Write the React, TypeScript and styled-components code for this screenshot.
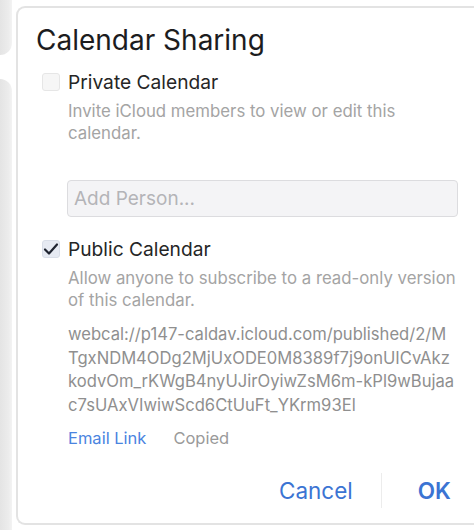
import React from "react";
import styled, { createGlobalStyle } from "styled-components";

const Global = createGlobalStyle`
  html, body { margin: 0; padding: 0; background: #ffffff; }
  body { overflow: hidden; font-family: Inter, "Noto Sans", "Liberation Sans", sans-serif; }
  * { box-sizing: border-box; }
`;

const Stage = styled.div`
  display: flex;
  width: 474px;
  height: 530px;
  overflow: hidden;
`;

const Backdrop = styled.div`
  width: 16px;
  flex: none;
  display: flex;
  flex-direction: column;
  gap: 24px;
`;

const BackWindow = styled.div<{ $top?: boolean }>`
  width: 12px;
  background: linear-gradient(90deg, #e4e4e4 0%, #ececec 70%, #f3f3f3 100%);
  ${(p) =>
    p.$top
      ? `height: 55px; border-bottom-right-radius: 12px;`
      : `flex: 1; border-top-right-radius: 12px;`}
`;

const Dialog = styled.div`
  margin-top: 6px;
  width: 480px;
  height: 519px;
  flex: none;
  border: 2px solid #e3e3e3;
  border-right: none;
  border-radius: 9px 0 0 9px;
  background: #ffffff;
  display: flex;
  flex-direction: column;
  padding: 12px 0 0 18px;
`;

const Title = styled.h1`
  margin: 0;
  font-size: 28px;
  font-weight: 400;
  color: #1c1c1e;
  line-height: 40px;
`;

const Section = styled.div`
  margin-top: 10px;
  padding-left: 6px;
  display: flex;
  flex-direction: column;
`;

const OptionRow = styled.label<{ $gap?: number }>`
  display: flex;
  align-items: center;
  gap: 8px;
  height: 24px;
  margin-top: ${(p) => p.$gap ?? 0}px;
`;

const Box = styled.span<{ $checked?: boolean }>`
  width: 18px;
  height: 18px;
  border-radius: 3px;
  border: 1px solid ${(p) => (p.$checked ? "#d9dee8" : "#e6e6e6")};
  background: ${(p) => (p.$checked ? "#e6eaf2" : "#f6f6f6")};
  display: flex;
  align-items: center;
  justify-content: center;
  flex: none;
`;

const OptionLabel = styled.span`
  font-size: 19.2px;
  color: #262626;
`;

const Body = styled.div`
  padding-left: 26px;
  display: flex;
  flex-direction: column;
`;

const Desc = styled.p`
  margin: 6px 0 0;
  font-size: 16.8px;
  line-height: 22px;
  color: #a4a4a4;
  white-space: nowrap;
`;

const Input = styled.input`
  margin: 36px 0 0 -1px;
  width: 391px;
  height: 37px;
  border: 1px solid #dcdcdf;
  border-radius: 4px;
  background: #f4f4f6;
  font-family: inherit;
  font-size: 19px;
  padding: 0 6px;
  color: #333;
  outline: none;
  &::placeholder { color: #b4b4b8; }
`;

const Url = styled.p`
  margin: 12px 0 0;
  font-size: 16.6px;
  line-height: 23.5px;
  color: #8f8f8f;
  white-space: nowrap;
`;

const Line = styled.span`
  display: block;
`;

const Links = styled.div`
  margin-top: 10px;
  display: flex;
  gap: 27px;
  font-size: 16.5px;
  line-height: 22px;
`;

const LinkText = styled.span<{ $muted?: boolean }>`
  color: ${(p) => (p.$muted ? "#9a9a9a" : "#4a84df")};
`;

const Footer = styled.div`
  margin-top: auto;
  display: flex;
  align-items: center;
  padding-left: 243px;
  height: 36px;
  margin-bottom: 15px;
`;

const Btn = styled.span<{ $primary?: boolean }>`
  font-size: 22.5px;
  color: #3b74d3;
  font-weight: ${(p) => (p.$primary ? 600 : 400)};
`;

const Divider = styled.span`
  width: 1px;
  height: 35px;
  background: #ececec;
  margin: 0 36px 0 28px;
`;

const Check = () => (
  <svg width="16" height="14" viewBox="0 0 16 14" fill="none">
    <path d="M2 7.5 L6 11.5 L14 2.5" stroke="#1f2430" strokeWidth="2.2" strokeLinecap="round" strokeLinejoin="round" />
  </svg>
);

const urlLines = [
  "webcal://p147-caldav.icloud.com/published/2/M",
  "TgxNDM4ODg2MjUxODE0M8389f7j9onUICvAkz",
  "kodvOm_rKWgB4nyUJirOyiwZsM6m-kPl9wBujaa",
  "c7sUAxVIwiwScd6CtUuFt_YKrm93El",
];

export default function App() {
  return (
    <>
      <Global />
      <Stage>
        <Backdrop>
          <BackWindow $top />
          <BackWindow />
        </Backdrop>
        <Dialog>
          <Title>Calendar Sharing</Title>
          <Section>
            <OptionRow>
              <Box />
              <OptionLabel>Private Calendar</OptionLabel>
            </OptionRow>
            <Body>
              <Desc>
                <Line>Invite iCloud members to view or edit this</Line>
                <Line>calendar.</Line>
              </Desc>
              <Input placeholder="Add Person..." readOnly />
            </Body>
            <OptionRow $gap={20}>
              <Box $checked>
                <Check />
              </Box>
              <OptionLabel>Public Calendar</OptionLabel>
            </OptionRow>
            <Body>
              <Desc>
                <Line>Allow anyone to subscribe to a read-only version</Line>
                <Line>of this calendar.</Line>
              </Desc>
              <Url>
                {urlLines.map((l) => (
                  <Line key={l}>{l}</Line>
                ))}
              </Url>
              <Links>
                <LinkText>Email Link</LinkText>
                <LinkText $muted>Copied</LinkText>
              </Links>
            </Body>
          </Section>
          <Footer>
            <Btn>Cancel</Btn>
            <Divider />
            <Btn $primary>OK</Btn>
          </Footer>
        </Dialog>
      </Stage>
    </>
  );
}
